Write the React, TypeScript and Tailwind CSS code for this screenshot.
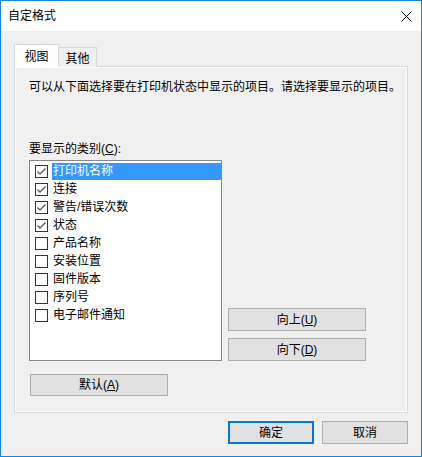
import React from "react";

const items = [
  { label: "打印机名称", checked: true },
  { label: "连接", checked: true },
  { label: "警告/错误次数", checked: true },
  { label: "状态", checked: true },
  { label: "产品名称", checked: false },
  { label: "安装位置", checked: false },
  { label: "固件版本", checked: false },
  { label: "序列号", checked: false },
  { label: "电子邮件通知", checked: false },
];

const Checkbox = ({ checked }: { checked: boolean }) => (
  <div className="w-[13px] h-[13px] border border-[#333333] bg-white flex items-center justify-center shrink-0">
    {checked && (
      <svg width="11" height="11" viewBox="0 0 11 11">
        <path d="M1.5 5.5 L4 8 L9.5 2.5" fill="none" stroke="#5a5a5a" strokeWidth="1.4" />
      </svg>
    )}
  </div>
);

const Button = ({ children, className = "" }: { children: React.ReactNode; className?: string }) => (
  <div
    className={`flex items-center justify-center bg-[#e1e1e1] border border-[#adadad] text-[12px] text-black ${className}`}
  >
    {children}
  </div>
);

const App = () => {
  return (
    <div
      className="w-[422px] h-[457px] border border-[#1883d7] bg-[#f0f0f0] flex flex-col text-black"
      style={{ fontFamily: '"Liberation Sans", "Noto Sans CJK SC", sans-serif' }}
    >
      {/* title bar */}
      <div className="h-[30px] bg-white flex items-center justify-between pl-[7px] pr-[9px] shrink-0">
        <span className="text-[12px] leading-none">自定格式</span>
        <svg width="11" height="11" viewBox="0 0 11 11">
          <path d="M0.5 0.5 L10.5 10.5 M10.5 0.5 L0.5 10.5" stroke="#000" strokeWidth="1" />
        </svg>
      </div>

      <div className="flex flex-col px-[13px] pt-[13px]">
        {/* tabs */}
        <div className="flex items-end h-[23px] relative z-10">
          <div className="w-[45px] h-[23px] bg-white border border-b-0 border-[#d9d9d9] flex items-center justify-center text-[12px] pt-[1px]">
            视图
          </div>
          <div className="w-[38px] h-[20px] bg-[#f0f0f0] border border-l-0 border-b-0 border-[#d9d9d9] flex items-center justify-center text-[12px] pt-[2px]">
            其他
          </div>
        </div>

        {/* panel */}
        <div className="-mt-[1px] h-[347px] border border-[#d9d9d9] bg-[#f0f0f0] shadow-[inset_1px_1px_0_#ffffff,inset_-1px_-1px_0_#ffffff] flex flex-col pl-[14px] pt-[12px]">
          <div className="text-[12px] leading-[16px]">可以从下面选择要在打印机状态中显示的项目。请选择要显示的项目。</div>
          <div className="text-[12px] leading-[16px] mt-[46px]">
            要显示的类别(<u>C</u>):
          </div>
          <div className="flex items-end mt-[3px]">
            <div className="w-[193px] h-[201px] border border-[#828790] bg-white pt-[1px] flex flex-col">
              {items.map((it, i) => (
                <div key={i} className="h-[18px] flex items-center pl-[5px]">
                  <Checkbox checked={it.checked} />
                  <div
                    className={`ml-[4px] flex-1 h-[17px] flex items-center pl-[1px] text-[12px] leading-none ${
                      i === 0 ? "bg-[#3399ff] text-white" : ""
                    }`}
                  >
                    {it.label}
                  </div>
                </div>
              ))}
            </div>
            <div className="flex flex-col gap-[7px] ml-[6px]">
              <Button className="w-[138px] h-[23px]">
                向上(<u>U</u>)
              </Button>
              <Button className="w-[138px] h-[23px]">
                向下(<u>D</u>)
              </Button>
            </div>
          </div>
          <Button className="w-[138px] h-[22px] mt-[13px] ml-[1px]">
            默认(<u>A</u>)
          </Button>
        </div>

        {/* footer */}
        <div className="flex justify-end gap-[8px] mt-[8px]">
          <Button className="w-[86px] h-[23px] !border-2 !border-[#0078d7]">确定</Button>
          <Button className="w-[86px] h-[23px]">取消</Button>
        </div>
      </div>
    </div>
  );
};

export default App;
